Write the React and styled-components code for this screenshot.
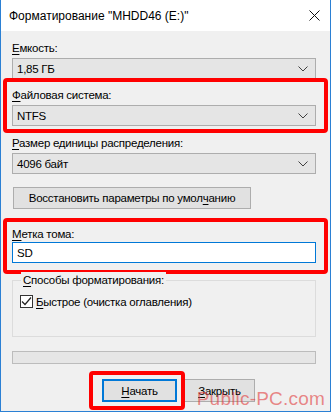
import React from 'react'
import styled, { createGlobalStyle } from 'styled-components';

const Global = createGlobalStyle`
  html, body { margin: 0; padding: 0; background: #fff; }
  * { box-sizing: border-box; }
`;

function Chevron() {
    return (
        <svg width="10" height="6" viewBox="0 0 10 6">
            <path d="M0.5 0.5 L5 5 L9.5 0.5" fill="none" stroke="#404040" strokeWidth="1" />
        </svg>
    )
}

function Combo({ value }) {
    return (
        <ComboBox>
            <span>{value}</span>
            <Chevron />
        </ComboBox>
    )
}

function App() {
    return (
        <Window>
            <Global />
            <TitleBar>
                <Title>Форматирование "MHDD46 (E:)"</Title>
                <svg width="11" height="11" viewBox="0 0 11 11">
                    <path d="M0.5 0.5 L10.5 10.5 M10.5 0.5 L0.5 10.5" stroke="#111" strokeWidth="1" />
                </svg>
            </TitleBar>
            <Body>
                <Label top={9}><u>Е</u>мкость:</Label>
                <Combo value="1,85 ГБ" />

                <Highlight top={8} bottom={7}>
                    <Label><u>Ф</u>айловая система:</Label>
                    <Combo value="NTFS" />
                </Highlight>

                <Label top={9}><u>Р</u>азмер единицы распределения:</Label>
                <Combo value="4096 байт" />

                <Button wide top={13}>Восстановить параметры по умол<u>ч</u>анию</Button>

                <Highlight top={17} bottom={11} mt={8}>
                    <Label tight><u>М</u>етка тома:</Label>
                    <Input>SD</Input>
                </Highlight>

                <Group>
                    <Legend><u>С</u>пособы форматирования:</Legend>
                    <CheckRow>
                        <CheckBox>
                            <svg width="11" height="11" viewBox="0 0 11 11">
                                <path d="M1 5.5 L4 8.5 L10 1.5" fill="none" stroke="#222" strokeWidth="1.2" />
                            </svg>
                        </CheckBox>
                        <span><u>Б</u>ыстрое (очистка оглавления)</span>
                    </CheckRow>
                </Group>

                <Progress />

                <Buttons>
                    <Mark>
                        <Button primary><u>Н</u>ачать</Button>
                    </Mark>
                    <Button><u>З</u>акрыть</Button>
                </Buttons>
            </Body>
            <Watermark>Public-PC.com</Watermark>
        </Window>
    )
}

const Window = styled.div`
    position: relative;
    width: 331px;
    height: 412px;
    border: 1px solid #2b80d4;
    border-top: none;
    background: #f0f0f0;
    font-family: "Liberation Sans", Arial, sans-serif;
    font-size: 11.5px;
    letter-spacing: -0.25px;
    color: #000;
    overflow: hidden;
    u { text-decoration-thickness: 1px; text-underline-offset: 2px; }
`;

const TitleBar = styled.div`
    height: 31px;
    background: #fff;
    display: flex;
    align-items: center;
    justify-content: space-between;
    padding: 0 10px 0 8px;
`;

const Title = styled.div`
    font-size: 12px;
    letter-spacing: 0;
    color: #000;
`;

const Body = styled.div`
    display: flex;
    flex-direction: column;
    padding: 0 14px 0 11px;
`;

const Label = styled.div`
    height: 16px;
    line-height: 16px;
    margin-top: ${p => p.top || 0}px;
    margin-bottom: ${p => p.tight ? 0 : 2}px;
`;

const ComboBox = styled.div`
    height: 21px;
    border: 1px solid #adadad;
    background: #e5e5e5;
    display: flex;
    align-items: center;
    justify-content: space-between;
    padding: 0 7px 0 4px;
`;

const Highlight = styled.div`
    position: relative;
    margin-top: ${p => p.top || 0}px;
    &::after {
        content: '';
        position: absolute;
        top: -${p => p.mt || 9}px;
        bottom: -${p => p.bottom || 7}px;
        left: -9px;
        right: -12px;
        border: 4px solid #ff0000;
        border-radius: 4px;
        pointer-events: none;
    }
`;

const Button = styled.div`
    align-self: flex-start;
    height: ${p => p.wide ? 22 : 23}px;
    width: ${p => p.wide ? 238 : p.primary ? 75 : 71}px;
    margin-top: ${p => p.top || 0}px;
    margin-left: ${p => p.wide ? 1 : 0}px;
    border: ${p => p.primary ? '2px solid #0078d7' : '1px solid #adadad'};
    background: #e1e1e1;
    display: flex;
    align-items: center;
    justify-content: center;
`;

const Input = styled.div`
    height: 21px;
    border: 1px solid #0078d7;
    background: #fff;
    display: flex;
    align-items: center;
    padding-left: 4px;
`;

const Group = styled.div`
    margin-top: 17px;
    height: 57px;
    border: 1px solid #dcdcdc;
    position: relative;
    padding: 14px 0 0 7px;
`;

const Legend = styled.div`
    position: absolute;
    top: -9px;
    left: 8px;
    padding: 0 2px;
    background: #f0f0f0;
    line-height: 16px;
`;

const CheckRow = styled.div`
    display: flex;
    align-items: center;
    gap: 3px;
`;

const CheckBox = styled.div`
    width: 13px;
    height: 13px;
    border: 1px solid #333;
    background: #fff;
    display: flex;
    align-items: center;
    justify-content: center;
`;

const Progress = styled.div`
    margin-top: 14px;
    height: 13px;
    border: 1px solid #bcbcbc;
    background: #e6e6e6;
`;

const Buttons = styled.div`
    display: flex;
    gap: 7px;
    margin-top: 15px;
    padding-left: 90px;
`;

const Mark = styled.div`
    position: relative;
    &::after {
        content: '';
        position: absolute;
        top: -8px;
        bottom: -8px;
        left: -13px;
        right: -8px;
        border: 4px solid #ff0000;
        border-radius: 4px;
    }
`;

const Watermark = styled.div`
    position: absolute;
    right: 5px;
    bottom: 1px;
    font-family: "Liberation Sans", Arial, sans-serif;
    font-size: 19px;
    letter-spacing: 0.2px;
    color: rgba(225, 60, 60, 0.6);
`;

export default App
